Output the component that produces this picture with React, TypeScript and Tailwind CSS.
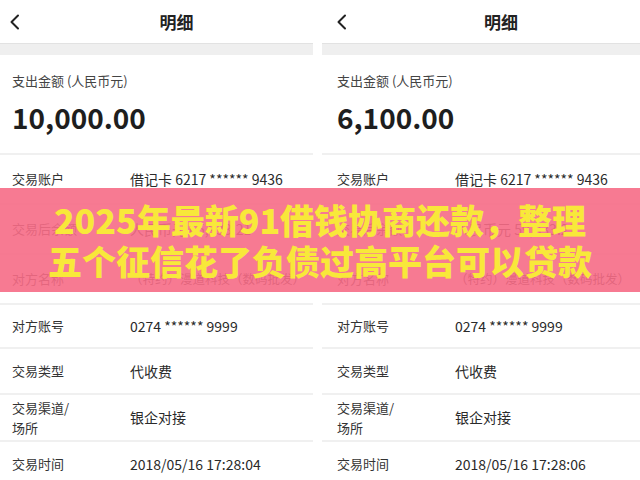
import React from 'react'

// 两个账单明细截图 + 粉色标题横幅
type Row = { label: string[]; value: string; h: string; small?: boolean }

const panels = [
  {
    amount: '10,000.00',
    balance: '人民币元 65,933.21',
    time: '2018/05/16 17:28:04',
  },
  {
    amount: '6,100.00',
    balance: '人民币元 59,833.21',
    time: '2018/05/16 17:28:06',
  },
]

const Chevron = () => (
  <svg width="12" height="16" viewBox="0 0 12 16" fill="none">
    <polyline points="9,1.5 2.5,8 9,14.5" stroke="#222" strokeWidth="2" strokeLinecap="round" strokeLinejoin="round" />
  </svg>
)

const Panel = ({ amount, balance, time, wide }: { amount: string; balance: string; time: string; wide?: boolean }) => {
  const rows: Row[] = [
    { label: ['交易账户'], value: '借记卡 6217 ****** 9436', h: 'h-[50px]' },
    { label: ['交易后余额'], value: balance, h: 'h-[50px]' },
    { label: ['对方名称'], value: '（特约）漫道科技（数码批发）', h: 'h-[50px]', small: true },
    { label: ['对方账号'], value: '0274 ****** 9999', h: 'h-[44px]' },
    { label: ['交易类型'], value: '代收费', h: 'h-[46px]' },
    { label: ['交易渠道/', '场所'], value: '银企对接', h: 'h-[47px]' },
    { label: ['交易时间'], value: time, h: 'h-[46px]' },
  ]

  return (
    <div className={`${wide ? 'flex-1' : 'w-[313px]'} flex flex-col bg-white`}>
      {/* header */}
      <div className="h-[43px] flex items-center">
        <div className={`${wide ? 'pl-[14px]' : 'pl-[9px]'} w-[48px] flex items-center`}>
          <Chevron />
        </div>
        <div className="flex-1 text-center text-[17px] font-bold text-[#222] pr-[8px]">明细</div>
      </div>
      <div className="h-[12px] bg-[#efefef] border-t border-[#e2e2e2]" />

      {/* amount */}
      <div className={`h-[100px] ${wide ? 'pl-[15px]' : 'pl-[12px]'} flex flex-col justify-center border-b-2 border-[#f0f0f0]`}>
        <div className="text-[13px] text-[#444] leading-[18px]">支出金额 (人民币元)</div>
        <div className="text-[28px] font-bold text-[#1e1e1e] leading-[38px] mt-[8px]">{amount}</div>
      </div>

      {rows.map((r) => (
        <div key={r.label.join('')} className={`${r.h} flex items-center border-b-2 border-[#f0f0f0] ${wide ? 'pl-[15px]' : 'pl-[12px]'}`}>
          <div className="w-[118px] shrink-0 text-[13px] text-[#333] leading-[20px]">
            {r.label.map((l) => (
              <div key={l}>{l}</div>
            ))}
          </div>
          <div className={`${r.small ? 'text-[12.5px]' : 'text-[14px]'} text-[#2a2a2a] whitespace-nowrap`}>{r.value}</div>
        </div>
      ))}
    </div>
  )
}

export default function App() {
  return (
    <div
      className="w-[640px] h-[480px] overflow-hidden relative bg-white"
      style={{ fontFamily: "'Noto Sans CJK SC', 'Noto Sans', sans-serif" }}
    >
      <div className="flex gap-[9px]">
        <Panel {...panels[0]} />
        <Panel {...panels[1]} wide />
      </div>

      {/* banner over the screenshots */}
      <div className="absolute left-0 right-0 top-[188px] h-[104px] bg-[rgba(246,107,134,0.9)] flex flex-col items-center justify-center">
        <div className="text-[34px] leading-[41px] font-black text-[#f8e83a] whitespace-nowrap">
          2025年最新91借钱协商还款，整理
        </div>
        <div className="text-[34px] leading-[41px] font-black text-[#f8e83a] whitespace-nowrap">
          五个征信花了负债过高平台可以贷款
        </div>
      </div>
    </div>
  )
}
